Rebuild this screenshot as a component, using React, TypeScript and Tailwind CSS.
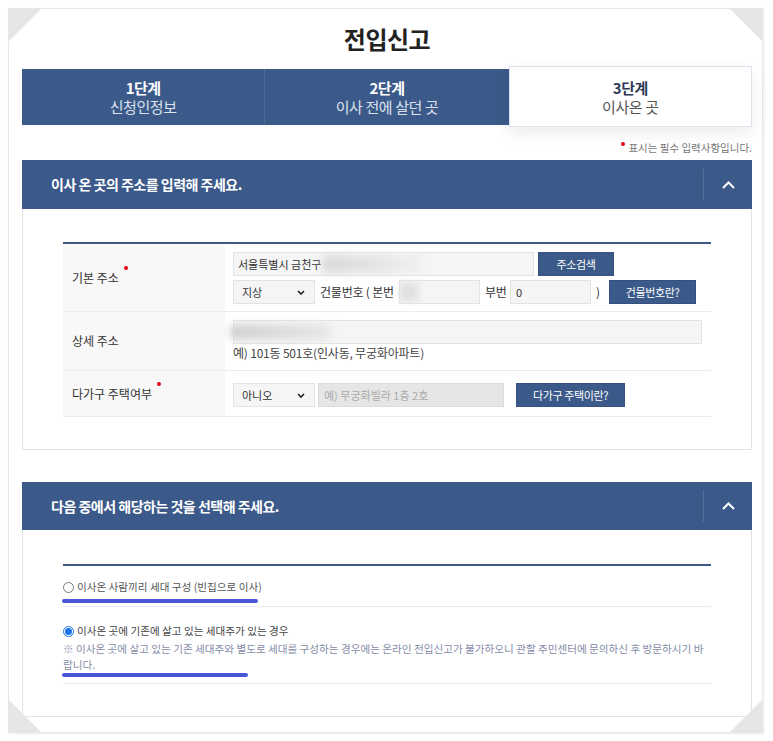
const BLUE = 'bg-[#3b5a89]';

function ChevronUp() {
  return (
    <svg width="13" height="8" viewBox="0 0 13 8" fill="none">
      <polyline points="1,7 6.5,1.5 12,7" stroke="white" strokeWidth="2" />
    </svg>
  );
}

function SelectArrow() {
  return (
    <svg width="8" height="5" viewBox="0 0 8 5" fill="none">
      <polyline points="1,1 4,4 7,1" stroke="#222" strokeWidth="1.6" />
    </svg>
  );
}

function Dot() {
  return <span className="ml-[5px] mb-[20px] size-[4px] rounded-full bg-[#e60012]" />;
}

function SectionHeader({ title, h }: { title: string; h: string }) {
  return (
    <div className={`flex ${h} items-center ${BLUE}`}>
      <h2 className="flex-1 pl-[29px] text-[14px] font-bold tracking-[-0.5px] text-white">{title}</h2>
      <div className="flex h-[32px] w-[49px] items-center justify-center border-l border-[#56709c]">
        <ChevronUp />
      </div>
    </div>
  );
}

function Select({ value }: { value: string }) {
  return (
    <div className="flex h-[24px] w-[82px] items-center justify-between border border-[#e3e3e3] bg-[#f5f5f5] pl-[8px] pr-[9px] text-[11px] text-[#333]">
      {value}
      <SelectArrow />
    </div>
  );
}

function Button({ label, w }: { label: string; w: string }) {
  return (
    <div className={`flex h-[24px] ${w} items-center justify-center border border-[#345180] ${BLUE} text-[11px] tracking-[-0.4px] text-white`}>
      {label}
    </div>
  );
}

function Label({ text, required }: { text: string; required?: boolean }) {
  return (
    <div className="flex w-[162px] items-center bg-[#f8f8f8] pl-[9px] text-[12px] text-[#333]">
      <span>{text}</span>
      {required && <Dot />}
    </div>
  );
}

function Radio({ checked }: { checked?: boolean }) {
  return checked ? (
    <span className="flex size-[11px] items-center justify-center rounded-full border border-[#1a73e8] bg-white">
      <span className="size-[7px] rounded-full bg-[#1a73e8]" />
    </span>
  ) : (
    <span className="size-[11px] rounded-full border border-[#777] bg-white" />
  );
}

export default function App() {
  return (
    <div className="h-[741px] w-[773px] bg-white pl-[8px] pt-[8px] font-['Noto_Sans_CJK_KR','Noto_Sans',sans-serif]">
      <div className="relative h-[725px] w-[755px] border border-[#e6e6e6] pl-[13px] pr-[10px] shadow-[1px_1px_2px_rgba(0,0,0,0.08)]">
        {/* folded corners */}
        <div className="absolute left-0 top-0 size-[32px] bg-[#e6e6e6] [clip-path:polygon(0_0,100%_0,0_100%)]" />
        <div className="absolute right-0 top-0 size-[32px] bg-[#e6e6e6] [clip-path:polygon(0_0,100%_0,100%_100%)]" />
        <div className="absolute bottom-0 left-0 size-[32px] bg-[#e6e6e6] [clip-path:polygon(0_0,100%_100%,0_100%)]" />
        <div className="absolute bottom-0 right-0 size-[32px] bg-[#e6e6e6] [clip-path:polygon(100%_0,100%_100%,0_100%)]" />

        <div className="flex h-[60px] items-center justify-center">
          <h1 className="text-[24px] font-bold tracking-[-0.5px] text-[#222]">전입신고</h1>
        </div>

        {/* steps */}
        <div className={`grid h-[56px] grid-cols-3 ${BLUE}`}>
          <div className="flex flex-col items-center justify-center border-r border-[#4f6c99] leading-[19px]">
            <span className="text-[15px] font-bold tracking-[-0.5px] text-white">1단계</span>
            <span className="text-[15px] tracking-[-0.4px] text-[#dbe2ee]">신청인정보</span>
          </div>
          <div className="flex flex-col items-center justify-center leading-[19px]">
            <span className="text-[15px] font-bold tracking-[-0.5px] text-white">2단계</span>
            <span className="text-[15px] tracking-[-0.4px] text-[#dbe2ee]">이사 전에 살던 곳</span>
          </div>
          <div className="relative -mb-[2px] -mt-[3px] flex flex-col items-center justify-center border border-[#dde2ec] bg-white leading-[19px] shadow-[0_6px_16px_rgba(0,0,0,0.08)]">
            <span className="text-[15px] font-bold tracking-[-0.5px] text-[#2d3b57]">3단계</span>
            <span className="text-[15px] tracking-[-0.4px] text-[#555]">이사온 곳</span>
          </div>
        </div>

        <div className="flex h-[35px] items-start justify-end pt-[15px] text-[10.5px] leading-[16px] text-[#777]">
          <span className="mr-[3px] mt-[2px] size-[4px] rounded-full bg-[#e60012]" />
          표시는 필수 입력사항입니다.
        </div>

        {/* section 1 */}
        <SectionHeader title="이사 온 곳의 주소를 입력해 주세요." h="h-[49px]" />
        <div className="border-x border-b border-[#e3e3e3] px-[40px] pb-[32px] pt-[33px]">
          <div className="border-t-2 border-[#3b5a89]">
            <div className="flex border-b border-[#ececec]">
              <Label text="기본 주소" required />
              <div className="flex flex-col gap-[4px] pb-[7px] pt-[8px] pl-[8px]">
                <div className="flex">
                  <div className="flex h-[24px] w-[301px] items-center border border-[#e3e3e3] bg-[#f5f5f5] pl-[4px] text-[11px] text-[#333]">
                    서울특별시 금천구
                    <span className="ml-[2px] h-[16px] w-[100px] bg-gradient-to-r from-[#d6d6d6] to-[#f0f0f0] blur-[4px]" />
                  </div>
                  <div className="ml-[4px]">
                    <Button label="주소검색" w="w-[76px]" />
                  </div>
                </div>
                <div className="flex items-center text-[12px] tracking-[-0.2px] text-[#333]">
                  <Select value="지상" />
                  <span className="w-[84px] pl-[5px]">건물번호 ( 본번</span>
                  <div className="flex h-[24px] w-[81px] items-center border border-[#e3e3e3] bg-[#f5f5f5]">
                    <span className="h-[18px] w-[18px] bg-[#e0e0e0] blur-[3px]" />
                  </div>
                  <span className="w-[30px] pl-[5px]">부번</span>
                  <div className="flex h-[24px] w-[81px] items-center border border-[#e3e3e3] bg-[#f5f5f5] pl-[5px] text-[11px]">0</div>
                  <span className="w-[18px] pl-[5px]">)</span>
                  <Button label="건물번호란?" w="w-[87px]" />
                </div>
              </div>
            </div>

            <div className="flex border-b border-[#ececec]">
              <Label text="상세 주소" />
              <div className="flex flex-col pb-[8px] pl-[8px] pt-[8px]">
                <div className="flex h-[24px] w-[469px] items-center border border-[#e3e3e3] bg-[#f5f5f5] pl-[6px]">
                  <span className="-ml-[10px] h-[14px] w-[100px] bg-gradient-to-r from-[#cfcfcf] to-[#e6e6e6] blur-[4px]" />
                </div>
                <span className="text-[12px] leading-[18px] tracking-[-0.2px] text-[#444]">예) 101동 501호(인사동, 무궁화아파트)</span>
              </div>
            </div>

            <div className="flex border-b border-[#ececec]">
              <Label text="다가구 주택여부" required />
              <div className="flex items-center pb-[9px] pl-[8px] pt-[12px]">
                <Select value="아니오" />
                <div className="ml-[3px] flex h-[24px] w-[186px] items-center border border-[#dcdcdc] bg-[#e6e6e6] pl-[5px] text-[11px] text-[#aaa]">
                  예) 무궁화빌라 1층 2호
                </div>
                <div className="ml-[12px]">
                  <Button label="다가구 주택이란?" w="w-[109px]" />
                </div>
              </div>
            </div>
          </div>
        </div>

        <div className="h-[32px]" />

        {/* section 2 */}
        <SectionHeader title="다음 중에서 해당하는 것을 선택해 주세요." h="h-[48px]" />
        <div className="border-x border-b border-[#e3e3e3] px-[40px] pb-[32px] pt-[34px]">
          <div className="border-t-2 border-[#3b5a89]">
            <div className="border-b border-[#ececec] pb-[3px] pt-[13px]">
              <div className="flex items-center gap-[3px] text-[10.6px] leading-[16px] text-[#555]">
                <Radio />
                이사온 사람끼리 세대 구성 (빈집으로 이사)
              </div>
              <div className="-ml-[1px] mt-[4px] h-[4px] w-[196px] rounded-full bg-[#4b55d8]" />
            </div>
            <div className="border-b border-[#ececec] pb-[6px] pt-[16px]">
              <div className="flex items-center gap-[3px] text-[10.6px] leading-[16px] text-[#444]">
                <Radio checked />
                이사온 곳에 기존에 살고 있는 세대주가 있는 경우
              </div>
              <p className="mt-[2px] text-[10.6px] leading-[16px] text-[#858ca8]">
                <span className="whitespace-nowrap">※ 이사온 곳에 살고 있는 기존 세대주와 별도로 세대를 구성하는 경우에는 온라인 전입신고가 불가하오니 관할 주민센터에 문의하신 후 방문하시기 바</span>
                <br />
                랍니다.
              </p>
              <div className="-ml-[1px] h-[4px] w-[186px] rounded-full bg-[#4b55d8]" />
            </div>
          </div>
        </div>
      </div>
    </div>
  );
}
